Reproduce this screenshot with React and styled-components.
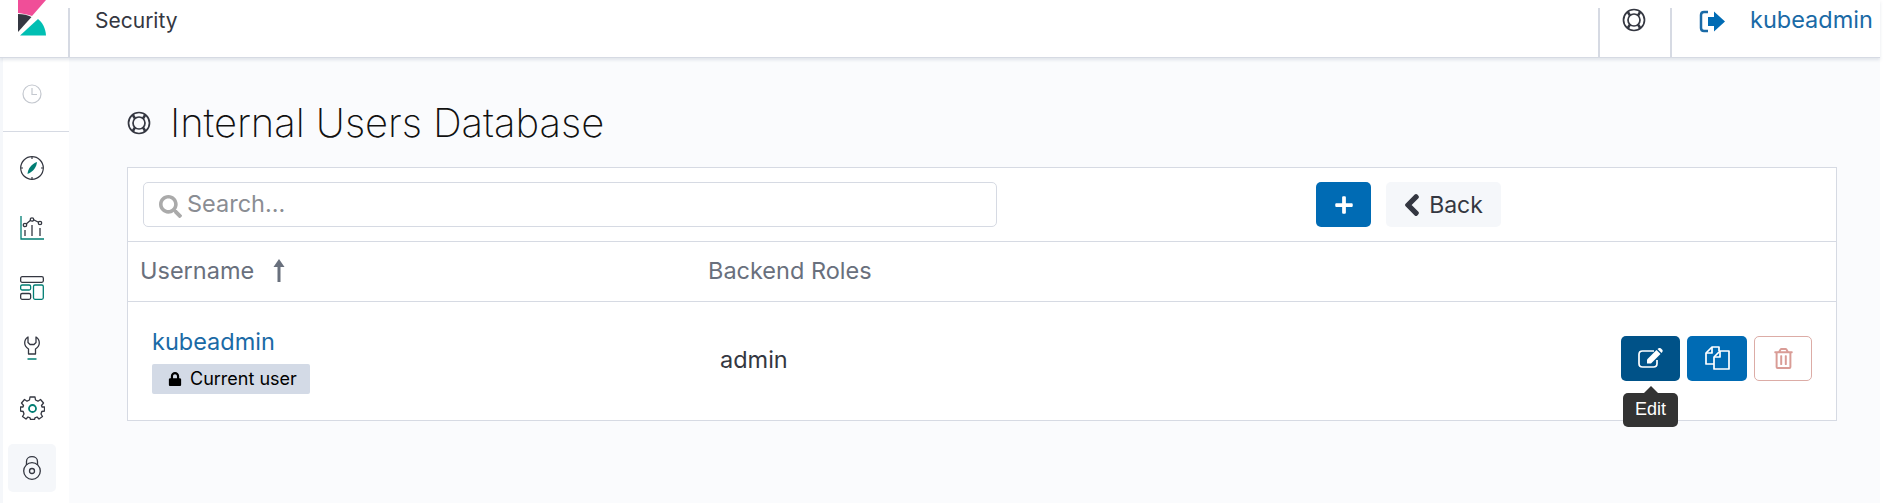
import styled, { createGlobalStyle } from 'styled-components';
import { FaChevronLeft, FaLock, FaPlus, FaRegTrashAlt, FaSearch } from 'react-icons/fa';

const Global = createGlobalStyle`
  html, body { margin: 0; padding: 0; background: #fff; }
  body { font-family: Inter, "Noto Sans", sans-serif; color: #343741; width: 1892px; height: 503px; overflow: hidden; }
`;

const Page = styled.div`
  width: 1880px;
  height: 503px;
  display: flex;
  flex-direction: column;
`;

const Header = styled.header`
  height: 57px;
  flex: none;
  display: flex;
  background: #fff;
  border-bottom: 1px solid #d6dae3;
  box-shadow: 0 2px 3px rgba(152, 162, 179, 0.25);
  position: relative;
  z-index: 2;
  overflow: hidden;
`;

const LogoCell = styled.div`
  width: 68px;
  flex: none;
  padding-left: 18px;
  box-sizing: border-box;
`;

const Divider = styled.div`
  flex: none;
  width: 2px;
  height: 49px;
  margin-top: 8px;
  background: #d6dae3;
`;

const Crumb = styled.div`
  flex: 1;
  padding: 9px 0 0 25px;
  font-size: 21px;
  line-height: 24px;
  color: #343741;
`;

const HelpCell = styled.div`
  width: 70px;
  flex: none;
  padding: 8px 2px 0 0;
  display: flex;
  justify-content: center;
  box-sizing: border-box;
`;

const UserCell = styled.div`
  flex: none;
  width: 208px;
  padding: 8px 0 0 27px;
  box-sizing: border-box;
  display: flex;
  gap: 24px;
  font-size: 23.500px;
  line-height: 24px;
  color: #1a6aa6;
  white-space: nowrap;

  svg {
    flex: none;
    margin-top: 2px;
  }
`;

const Body = styled.div`
  flex: 1;
  display: flex;
  min-height: 0;
`;

const Nav = styled.nav`
  width: 69px;
  flex: none;
  box-sizing: border-box;
  background: #fff;
  border-left: 3px solid #f5f7fa;
  display: flex;
  flex-direction: column;
  box-shadow: 1px 0 3px rgba(152, 162, 179, 0.2);
`;

const Recent = styled.div`
  height: 74px;
  flex: none;
  box-sizing: border-box;
  display: flex;
  align-items: center;
  justify-content: center;
  border-bottom: 1px solid #d6dae3;
  padding: 0 8px 2px 0;
`;

const NavList = styled.div`
  display: flex;
  flex-direction: column;
  align-items: center;
  gap: 12px;
  padding: 12px 8px 0 0;
`;

const NavItem = styled.div`
  width: 48px;
  height: 48px;
  border-radius: 5px;
  display: flex;
  align-items: center;
  justify-content: center;
  background: ${(p) => (p.$active ? '#f5f7fa' : 'transparent')};
`;

const Main = styled.main`
  flex: 1;
  background: #fafbfd;
  padding: 45px 43px 0 58px;
  min-width: 0;
`;

const TitleRow = styled.div`
  display: flex;
  align-items: center;
  gap: 19px;
  height: 40px;
  margin-bottom: 24px;
`;

const Title = styled.h1`
  margin: 0;
  font-size: 40px;
  line-height: 48px;
  font-weight: 250;
  color: #111;
  letter-spacing: -0.050px;
`;

const Panel = styled.section`
  background: #fff;
  border: 1px solid #d6dae3;
`;

const SearchRow = styled.div`
  height: 73px;
  display: flex;
  align-items: center;
  padding: 0 15px;
  border-bottom: 1px solid #d6dae3;
`;

const SearchBox = styled.div`
  width: 854px;
  height: 45px;
  box-sizing: border-box;
  border: 1px solid #d6dae3;
  border-radius: 5px;
  display: flex;
  align-items: center;
  gap: 5px;
  padding: 0 0 3px 15px;
  font-size: 23.500px;
  color: #8a8d93;
  margin-right: 319px;
`;

const SearchIcon = styled(FaSearch)`
  font-size: 23px;
  color: #aaa;
  margin-top: 6px;
`;

const IconButton = styled.div`
  width: ${(p) => p.$w || 55}px;
  height: 45px;
  box-sizing: border-box;
  border-radius: 5px;
  display: flex;
  align-items: center;
  justify-content: center;
  flex: none;
  color: #fff;
  background: ${(p) => p.$bg || '#006bb4'};
  ${(p) => p.$outline && 'border: 1px solid #dcaca6; background: #fff; color: #d99c96;'}
`;

const BackButton = styled.div`
  width: 115px;
  height: 45px;
  box-sizing: border-box;
  margin-left: 15px;
  padding-right: 4px;
  border-radius: 5px;
  background: #f5f7fa;
  display: flex;
  align-items: center;
  justify-content: center;
  gap: 5px;
  font-size: 23px;
  color: #343741;
`;

const HeadRow = styled.div`
  height: 60px;
  box-sizing: border-box;
  display: grid;
  grid-template-columns: 568px 1fr;
  align-items: center;
  padding: 0 0 2px 12px;
  border-bottom: 1px solid #d6dae3;
  font-size: 23.500px;
  color: #69707d;
`;

const HeadCell = styled.div`
  display: flex;
  align-items: center;
  gap: 19px;
`;

const UserRow = styled.div`
  height: 118px;
  display: grid;
  grid-template-columns: 568px 1fr auto;
  align-items: center;
  padding: 0 24px 0 24px;
`;

const UserCol = styled.div`
  display: flex;
  flex-direction: column;
  align-items: flex-start;
  gap: 9px;
  margin-top: -1px;
`;

const UserLink = styled.div`
  font-size: 23.500px;
  line-height: 27px;
  color: #1a6aa6;
`;

const Badge = styled.div`
  height: 30px;
  width: 158px;
  box-sizing: border-box;
  border-radius: 2px;
  background: #d3dae6;
  display: flex;
  align-items: center;
  gap: 8px;
  padding-left: 16px;
  font-size: 18px;
  color: #000;
`;

const Role = styled.div`
  font-size: 23.500px;
  color: #343741;
  margin-bottom: 4px;
`;

const Actions = styled.div`
  display: flex;
  gap: 7px;
  margin-bottom: 6px;
`;

const ButtonWrap = styled.div`
  position: relative;
`;

const Tooltip = styled.div`
  position: absolute;
  top: 57px;
  left: 2px;
  width: 55px;
  height: 34px;
  border-radius: 5px;
  background: #333;
  color: #fff;
  font-family: "Liberation Sans", Arial, sans-serif;
  font-size: 18px;
  display: flex;
  align-items: center;
  justify-content: center;

  &::before {
    content: '';
    position: absolute;
    top: -7px;
    left: 50%;
    margin-left: -7px;
    border: 7px solid transparent;
    border-top: 0;
    border-bottom-color: #333;
  }
`;

function Logo() {
  return (
    <svg width="28" height="36" viewBox="0 0 28 36">
      <path d="M0 0H28L14 16C10 14.500 5 13.500 0 13Z" fill="#f04e98" />
      <path d="M0 14C5 14 10 15 13.500 17L0 32Z" fill="#343741" />
      <path d="M2 35.500L20 19C24.500 22.500 27.500 28 28 35.500Z" fill="#00bfb3" />
    </svg>
  );
}

function LifeRing() {
  return (
    <svg width="24" height="24" viewBox="0 0 24 24" fill="none" stroke="#343741" strokeWidth="1.700">
      <circle cx="12" cy="12" r="10.500" />
      <circle cx="12" cy="12" r="6" />
      <path d="M5.500 3.500L8 7.500M18.500 3.500L16 7.500M5.500 20.500L8 16.500M18.500 20.500L16 16.500" strokeWidth="2.500" />
    </svg>
  );
}

function LogoutIcon() {
  return (
    <svg width="27" height="23" viewBox="0 0 27 23">
      <path d="M9 2H5Q2 2 2 5V18Q2 21 5 21H9" fill="none" stroke="#1a6aa6" strokeWidth="2.500" />
      <path d="M9 7H15V1.500L26 11.500L15 21.500V16H9Z" fill="#006bb4" />
    </svg>
  );
}

function ClockIcon() {
  return (
    <svg width="20" height="20" viewBox="0 0 20 20" fill="none" stroke="#c4c8cf" strokeWidth="1.200">
      <circle cx="10" cy="10" r="9" />
      <path d="M10 4V10.500H15" />
    </svg>
  );
}

const ink = '#343741';
const teal = '#017d73';

function CompassIcon() {
  return (
    <svg width="24" height="24" viewBox="0 0 24 24" fill="none" stroke={ink} strokeWidth="1.200">
      <circle cx="12" cy="12" r="11.300" />
      <path d="M12 0.700V3M12 21V23.300M0.700 12H3M21 12H23.300" />
      <path d="M17 6C16.500 11 13.500 15.500 7.500 18C8 12.500 11.500 8 17 6Z" fill={teal} stroke="none" />
    </svg>
  );
}

function ChartIcon() {
  return (
    <svg width="24" height="24" viewBox="0 0 24 24" fill="none" strokeWidth="1.300">
      <path d="M1 0V23H24" stroke={teal} />
      <path d="M5 9L12 3L20 7" stroke={ink} />
      <circle cx="5" cy="9" r="1.700" fill="#fff" stroke={ink} />
      <circle cx="12" cy="3.500" r="1.700" fill="#fff" stroke={ink} />
      <circle cx="20" cy="7" r="1.700" fill="#fff" stroke={ink} />
      <path d="M5 14V20M12 9V20M20 12V20" stroke={ink} />
    </svg>
  );
}

function DashboardIcon() {
  return (
    <svg width="24" height="24" viewBox="0 0 24 24" fill="none" strokeWidth="1.300">
      <rect x="0.650" y="0.650" width="22.700" height="5.700" rx="1.500" stroke={ink} />
      <rect x="0.650" y="9" width="10" height="5" rx="1.500" stroke={teal} />
      <rect x="0.650" y="17.500" width="10" height="5.800" rx="1.500" stroke={ink} />
      <rect x="13.500" y="9" width="9.800" height="14.300" rx="1.500" stroke={teal} />
    </svg>
  );
}

function WrenchIcon() {
  return (
    <svg width="16" height="24" viewBox="0 0 16 24" fill="none" strokeWidth="1.300">
      <path
        d="M4 1C1.500 2.500 0.700 5 0.700 7C0.700 10 3 12 4.500 13V18H11.500V13C13 12 15.300 10 15.300 7C15.300 5 14.500 2.500 12 1V6.500L10 8.500H6L4 6.500Z"
        stroke={ink}
        strokeLinejoin="round"
      />
      <path d="M3.500 23H12.500" stroke={teal} strokeWidth="1.500" />
    </svg>
  );
}

function GearIcon() {
  return (
    <svg width="25" height="24" viewBox="0 0 25 24" fill="none" strokeWidth="1.300">
      <path
        d="M10 1H15L15.500 4L18 5.200L20.500 3.500L23.500 7L21.500 9.500L22 11H24.500V15L21.800 15.500L21 18L22.500 20.500L19 23L17 21L15 21.800L14.500 23.500H10.500L10 21.800L8 21L6 23L2.500 20.500L4 18L3.200 15.500L0.500 15V11L3 11L3.500 9.500L1.500 7L4.500 3.500L7 5.200L9.500 4Z"
        stroke={ink}
        strokeLinejoin="round"
      />
      <circle cx="12.500" cy="12.500" r="3.500" stroke={teal} strokeWidth="1.800" />
    </svg>
  );
}

function LockIcon() {
  return (
    <svg width="18" height="24" viewBox="0 0 18 24" fill="none" stroke={ink} strokeWidth="1.300">
      <circle cx="9" cy="15" r="8.300" />
      <circle cx="9" cy="15" r="2.500" />
      <path d="M3.500 9V5.500C3.500 2.500 6 0.700 9 0.700C12 0.700 14.500 2.500 14.500 5.500V9" />
    </svg>
  );
}

function EditIcon() {
  return (
    <svg width="25" height="20" viewBox="0 0 25 20" fill="none" stroke="#fff" strokeWidth="1.700">
      <path d="M19 12V15.500Q19 19 15.500 19H4.500Q1 19 1 15.500V6.500Q1 3 4.500 3H16" />
      <path d="M9 11.500L18.500 2L22.500 6L13 15.500H9Z" fill="#fff" stroke="none" />
      <path d="M19.500 1L21 0Q22 -0.300 23 0.500L24.500 2Q25 3 24.300 4L23.500 5Z" fill="#fff" stroke="none" />
    </svg>
  );
}

function CopyIcon() {
  return (
    <svg width="25" height="24" viewBox="0 0 25 24" fill="none" stroke="#fff" strokeWidth="1.700" strokeLinejoin="round">
      <path d="M14 5V1H7L1 7V18H9" />
      <path d="M7 1V7H1" />
      <path d="M15 5H24V23H9V11Z" />
      <path d="M15 5V11H9" />
    </svg>
  );
}

function SortArrow() {
  return (
    <svg width="12" height="23" viewBox="0 0 12 23">
      <path d="M6 0L11.500 8H7.500V23H4.500V8H0.500Z" fill="#69707d" />
    </svg>
  );
}

export default function App() {
  return (
    <Page>
      <Global />
      <Header>
        <LogoCell>
          <Logo />
        </LogoCell>
        <Divider />
        <Crumb>Security</Crumb>
        <Divider />
        <HelpCell>
          <LifeRing />
        </HelpCell>
        <Divider />
        <UserCell>
          <LogoutIcon />
          kubeadmin
        </UserCell>
      </Header>
      <Body>
        <Nav>
          <Recent>
            <ClockIcon />
          </Recent>
          <NavList>
            <NavItem><CompassIcon /></NavItem>
            <NavItem><ChartIcon /></NavItem>
            <NavItem><DashboardIcon /></NavItem>
            <NavItem><WrenchIcon /></NavItem>
            <NavItem><GearIcon /></NavItem>
            <NavItem $active><LockIcon /></NavItem>
          </NavList>
        </Nav>
        <Main>
          <TitleRow>
            <LifeRing />
            <Title>Internal Users Database</Title>
          </TitleRow>
          <Panel>
            <SearchRow>
              <SearchBox>
                <SearchIcon />
                Search...
              </SearchBox>
              <IconButton><FaPlus size={20} /></IconButton>
              <BackButton>
                <FaChevronLeft size={24} stroke="currentColor" strokeWidth={30} />
                Back
              </BackButton>
            </SearchRow>
            <HeadRow>
              <HeadCell>
                Username
                <SortArrow />
              </HeadCell>
              <HeadCell>Backend Roles</HeadCell>
            </HeadRow>
            <UserRow>
              <UserCol>
                <UserLink>kubeadmin</UserLink>
                <Badge>
                  <FaLock size={14} />
                  Current user
                </Badge>
              </UserCol>
              <Role>admin</Role>
              <Actions>
                <ButtonWrap>
                  <IconButton $w={59} $bg="#005288"><EditIcon /></IconButton>
                  <Tooltip>Edit</Tooltip>
                </ButtonWrap>
                <IconButton $w={60}><CopyIcon /></IconButton>
                <IconButton $w={58} $outline><FaRegTrashAlt size={21} /></IconButton>
              </Actions>
            </UserRow>
          </Panel>
        </Main>
      </Body>
    </Page>
  );
}
